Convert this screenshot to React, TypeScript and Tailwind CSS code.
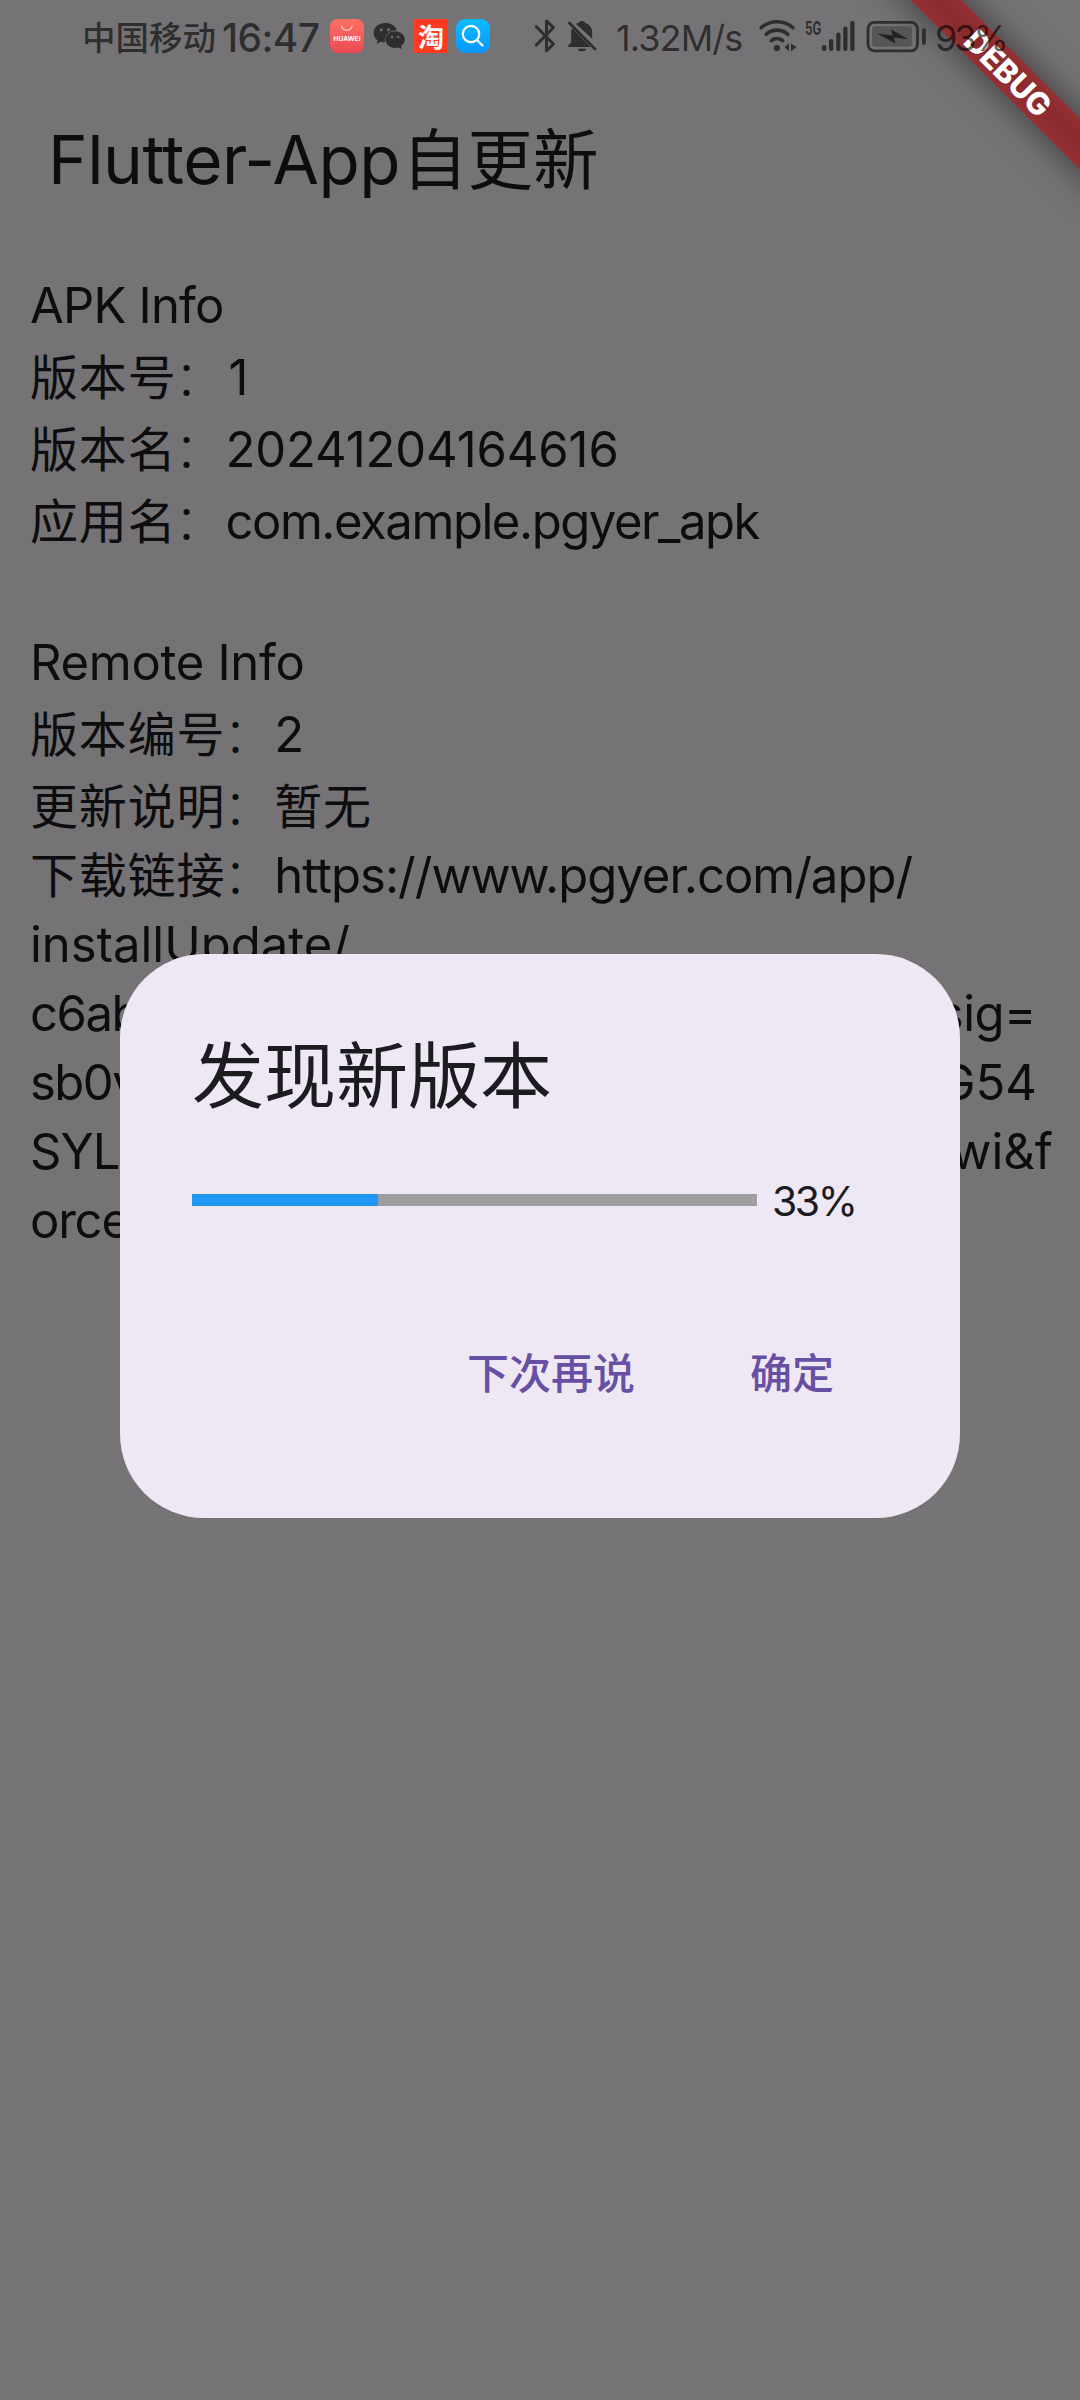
import type { ReactNode } from "react";

function Cjk({ children }: { children: ReactNode }) {
  return (
    <span className="font-['Noto_Sans_CJK_SC',sans-serif] text-[48px] leading-none tracking-[0.85px]">
      {children}
    </span>
  );
}

function Label({ children }: { children: ReactNode }) {
  return (
    <Cjk>
      {children}
      <span className="relative -left-[2px] font-light">：</span>
    </Cjk>
  );
}

function LabelLine({ label, children }: { label: string; children?: ReactNode }) {
  return (
    <div className="h-[72px] pt-[3px]">
      <Label>{label}</Label>
      {children}
    </div>
  );
}

function StatusBar() {
  return (
    <div className="relative z-20 flex h-[72px] items-start text-black/60">
      <span className="ml-[82px] mt-[11px] w-[140px] whitespace-nowrap font-['Noto_Sans_CJK_SC',sans-serif] text-[33.5px] font-medium leading-[50px]">
        中国移动
      </span>
      <span className="mt-[14px] w-[108px] whitespace-nowrap text-[39px] font-medium leading-[48px] tracking-[-0.6px]">
        16:47
      </span>

      <svg className="mt-[19px] h-[34px] w-[34px]" viewBox="0 0 34 34">
        <defs>
          <linearGradient id="hw" x1="0" y1="0" x2="0" y2="1">
            <stop offset="0" stopColor="#ff6f63" />
            <stop offset="1" stopColor="#e94b55" />
          </linearGradient>
          <linearGradient id="se" x1="0" y1="0" x2="0" y2="1">
            <stop offset="0" stopColor="#0bbcff" />
            <stop offset="1" stopColor="#0897ff" />
          </linearGradient>
        </defs>
        <rect width="34" height="34" rx="8" fill="url(#hw)" />
        <path d="M11.5 6.5a5.3 4.8 0 0 0 10.6 0" fill="none" stroke="#ffd9d4" strokeWidth="1.2" />
        <text x="17" y="22" textAnchor="middle" textLength="27" fontSize="6.6" fontWeight="700" fill="#fff" fontFamily="Inter">
          HUAWEI
        </text>
      </svg>

      <svg className="ml-[9px] mt-[22px] h-[28px] w-[32px]" viewBox="0 0 32 28">
        <path
          d="M12 1C5.600 1 .7 5.300 .7 10.900c0 3.200 1.500 5.800 4 7.600L3.800 21.700l4-2c1.600.5 2.700.6 4.300.6-1.500-6.500 4-12.300 11.600-12.100C22.500 3.700 17.700 1 12 1Z"
          fill="#2e2e2e"
        />
        <path
          d="M22.200 9.300c-5.400 0-9.700 3.700-9.700 8.300s4.300 8.300 9.700 8.300c1.200 0 2.300-.2 3.400-.5l3.300 1.700-.9-3c2.300-1.600 3.800-3.900 3.800-6.500 0-4.600-4.300-8.300-9.600-8.300Z"
          fill="#2e2e2e"
        />
        <g fill="#757375">
          <circle cx="8.300" cy="7.700" r="1.500" />
          <circle cx="15.600" cy="7.700" r="1.500" />
          <circle cx="19" cy="15" r="1.200" />
          <circle cx="25.200" cy="15" r="1.200" />
        </g>
      </svg>

      <span className="ml-[9px] mt-[19px] flex h-[34px] w-[34px] items-center justify-center bg-[#ff3a21] font-['Noto_Sans_CJK_SC',sans-serif] text-[26px] font-bold leading-[34px] text-white">
        淘
      </span>

      <svg className="ml-[8px] mt-[19px] h-[34px] w-[34px]" viewBox="0 0 34 34">
        <rect width="34" height="34" rx="9" fill="url(#se)" />
        <circle cx="15" cy="15" r="8.200" fill="none" stroke="#fff" strokeWidth="2.200" />
        <path d="M21 21l5.500 5.500" stroke="#fff" strokeWidth="2.400" strokeLinecap="round" />
      </svg>

      <svg className="ml-[44px] mt-[18px] h-[36px] w-[22px]" viewBox="0 0 22 36" fill="none" stroke="#2e2e2e" strokeWidth="3" strokeLinecap="round" strokeLinejoin="round">
        <path d="M2.300 8.700 19.500 26 12.500 32.700V3L19.500 9.500 2.300 27" />
      </svg>

      <svg className="ml-[11px] mt-[19px] h-[34px] w-[30px]" viewBox="0 0 30 34">
        <path
          d="M15 2c1.900 0 2.600.8 3.200 2 4.200 1.300 7 4.800 7 9.500v6.200L8.800 4.800c.9-.5 1.800-.7 3-.9C12.300 2.700 13.100 2 15 2ZM5.300 9.300 23.600 28H1.200v-1.500l3-3V13.500c0-1.600.4-3 1.100-4.200ZM10.800 29.700h8.400a4.300 3.400 0 0 1-8.400 0Z"
          fill="#2e2e2e"
        />
        <path d="M2.300 4 28 30" stroke="#2e2e2e" strokeWidth="2.600" strokeLinecap="round" />
      </svg>

      <span className="ml-[19px] mt-[15px] w-[143px] whitespace-nowrap text-[36px] leading-[46px] tracking-[-0.9px]">
        1.32M/s
      </span>

      <svg className="mt-[19px] h-[34px] w-[38px]" viewBox="0 0 38 34" fill="none" stroke="#2e2e2e" strokeWidth="3.600" strokeLinecap="round">
        <path d="M2.200 8.700a24 24 0 0 1 31.600 0" />
        <path d="M7.200 15.300a16 16 0 0 1 21.600 0" />
        <path d="M12.300 21.600a9 9 0 0 1 11.400 0" />
        <circle cx="18" cy="29" r="3.100" fill="#2e2e2e" stroke="none" />
        <path d="M30 24.500v7.800L25.500 28ZM32 24.500v7.800L37.500 28Z" fill="#2e2e2e" stroke="none" />
      </svg>

      <span className="ml-[8px] mt-[19px] w-[17px] whitespace-nowrap text-[18.500px] font-bold leading-[18px]">
        <span className="inline-block origin-left scale-x-[0.64]">5G</span>
      </span>

      <svg className="mt-[20px] h-[32px] w-[34px]" viewBox="0 0 34 32" fill="#2e2e2e">
        <rect x="0" y="25" width="4.300" height="6" rx="2" />
        <rect x="7" y="19" width="4.300" height="12" rx="2" />
        <rect x="14.200" y="12.500" width="4.300" height="18.500" rx="2" />
        <rect x="21.200" y="6.500" width="4.300" height="24.500" rx="2" />
        <rect x="28.200" y="1" width="4.300" height="30" rx="2" />
      </svg>

      <svg className="ml-[10px] mt-[20px] h-[33px] w-[61px]" viewBox="0 0 61 33">
        <rect x="2" y="2.300" width="49.500" height="28.500" rx="6.500" fill="none" stroke="#2e2e2e" strokeWidth="2.800" />
        <rect x="6" y="6.300" width="40" height="20.500" rx="3" fill="#565557" />
        <path d="M11 13.500 26.500 15.500 25 9.300 42.500 19.300 28 17.500 29.500 23.500Z" fill="#222223" />
        <rect x="56" y="8.300" width="3.800" height="16.500" rx="1.900" fill="#2e2e2e" />
      </svg>

      <span className="ml-[8px] mt-[15px] whitespace-nowrap text-[36px] leading-[46px] tracking-[-3px]">93%</span>
    </div>
  );
}

function DebugBanner() {
  return (
    <div className="pointer-events-none absolute right-0 top-0 z-10 h-[240px] w-[240px] overflow-hidden">
      <div className="absolute left-[18px] top-[54px] flex h-[36px] w-[300px] rotate-45 items-center justify-center bg-linear-to-b from-[#933033] via-[#8a2a2c] to-[#933033] pl-[2px] text-[31px] font-extrabold leading-none text-white shadow-[0_0_36px_rgba(0,0,0,0.5)]">
        DEBUG
      </div>
    </div>
  );
}

function InfoPanel() {
  return (
    <div className="pl-[30px] pt-[69px] text-[49px] leading-[69px]">
      <div className="h-[69px] tracking-[-0.8px]">APK Info</div>
      <LabelLine label="版本号">
        <span className="ml-[3px]">1</span>
      </LabelLine>
      <LabelLine label="版本名">
        <span className="tracking-[-0.1px]">20241204164616</span>
      </LabelLine>
      <LabelLine label="应用名">
        <span className="tracking-[-1.45px]">com.example.pgyer_apk</span>
      </LabelLine>
      <div className="h-[72px]" />
      <div className="h-[69px] tracking-[-0.3px]">Remote Info</div>
      <LabelLine label="版本编号">2</LabelLine>
      <LabelLine label="更新说明">
        <Cjk>暂无</Cjk>
      </LabelLine>
      <div className="h-[69px]">
        <Label>下载链接</Label>
        <span className="tracking-[-1px]">https://www.pgyer.com/app/</span>
      </div>
      <div className="h-[69px]">installUpdate/</div>
      <div className="flex h-[69px] justify-between pr-[44px] tracking-[-0.5px]">
        <span className="tracking-[-1.500px]">c6ab</span>
        <span>sig=</span>
      </div>
      <div className="flex h-[69px] justify-between pr-[43px]">
        <span className="tracking-[-1.500px]">sb0v</span>
        <span>G54</span>
      </div>
      <div className="flex h-[69px] justify-between pr-[27px]">
        <span className="tracking-[-1px]">SYLD</span>
        <span>wi&amp;f</span>
      </div>
      <div className="h-[69px] tracking-[-1.200px]">orce</div>
    </div>
  );
}

function UpdateDialog() {
  const progress = 33;
  return (
    <div className="absolute left-[120px] top-[954px] flex h-[564px] w-[840px] flex-col rounded-[84px] bg-[#eee8f4] px-[72px] pt-[72px] text-[#1c1b1f]">
      <h2 className="h-[108px] whitespace-nowrap font-['Noto_Sans_CJK_SC',sans-serif] text-[72px] leading-[90px]">
        发现新版本
      </h2>
      <div className="mt-[42px] flex h-[48px] items-center">
        <div className="h-[12px] w-[565px] bg-[#9e9e9e]">
          <div className="h-full bg-[#2196f3]" style={{ width: `${progress}%` }} />
        </div>
        <span className="ml-[15px] mt-[2px] whitespace-nowrap text-[41px] leading-[48px] tracking-[-2.5px]">
          {progress}%
        </span>
      </div>
      <div className="mt-[84px] flex h-[144px] justify-end pr-[54px] font-['Noto_Sans_CJK_SC',sans-serif] text-[42px] font-medium leading-[120px] text-[#6750a4]">
        <button className="mr-[115px] h-[126px] whitespace-nowrap">下次再说</button>
        <button className="h-[126px] whitespace-nowrap">确定</button>
      </div>
    </div>
  );
}

export default function App() {
  return (
    <div className="relative h-[2400px] w-[1080px] overflow-hidden bg-[#757375] font-['Inter','Noto_Sans_CJK_SC',sans-serif] text-[#0d0c0e]">
      <StatusBar />
      <h1 className="flex h-[130px] items-baseline whitespace-nowrap pl-[48px] pt-[47px] text-[67.4px] leading-[82px] tracking-[-0.500px]">
        Flutter-App
        <span className="ml-[2px] font-['Noto_Sans_CJK_SC',sans-serif] text-[65.500px] leading-none tracking-normal">
          自更新
        </span>
      </h1>
      <InfoPanel />
      <DebugBanner />
      <UpdateDialog />
    </div>
  );
}
